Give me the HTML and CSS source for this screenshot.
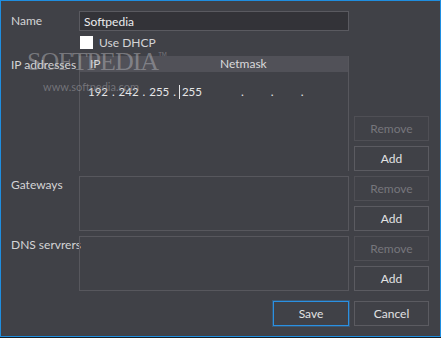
FILE: index.html
```html
<!DOCTYPE html>
<html lang="en">
<head>
    <meta charset="UTF-8">
    <title>Network settings</title>
    <link rel="stylesheet" href="styles.css">
</head>
<body>
    <div class="dialog">
        <div class="row name-row">
            <label class="lbl">Name</label>
            <input class="text" type="text" value="Softpedia">
        </div>

        <div class="row dhcp-row">
            <span class="lbl"></span>
            <label class="check"><span class="box"></span>Use DHCP</label>
        </div>

        <div class="row list-row ip-row">
            <span class="lbl">IP addresses</span>
            <div class="panel ip-panel">
                <div class="head">
                    <span>IP</span>
                    <span>Netmask</span>
                </div>
                <div class="ip-line">
                    <span class="addr">192 . 242 . 255 .<span class="caret"></span>255</span>
                    <span class="mask"><i>.</i><i>.</i><i>.</i></span>
                </div>
            </div>
            <div class="side">
                <button class="btn" disabled>Remove</button>
                <button class="btn">Add</button>
            </div>
        </div>

        <div class="row list-row">
            <span class="lbl">Gateways</span>
            <div class="panel boxed"></div>
            <div class="side">
                <button class="btn" disabled>Remove</button>
                <button class="btn">Add</button>
            </div>
        </div>

        <div class="row list-row">
            <span class="lbl">DNS servrers</span>
            <div class="panel boxed"></div>
            <div class="side">
                <button class="btn" disabled>Remove</button>
                <button class="btn">Add</button>
            </div>
        </div>

        <div class="row footer">
            <button class="btn primary">Save</button>
            <button class="btn">Cancel</button>
        </div>

        <!-- watermark sits on top of the form -->
        <div class="mark">SOFTPEDIA<sup>TM</sup></div>
        <div class="mark-url">www.softpedia.com</div>
    </div>
</body>
</html>
```

FILE: styles.css
```css
body {
    margin: 0;
    background-color: #1c1c1e;
    font-family: Lato, "Noto Sans", sans-serif;
    font-size: 12px;
    color: #d4d4d6;
}
.dialog {
    position: relative;
    box-sizing: border-box;
    width: 441px;
    height: 337px;
    padding: 10px 11px 0 10px;
    background-color: #404147;
    border: 1px solid #1f8ee0;
}
.row {
    display: flex;
}
.lbl {
    width: 68px;
    flex: none;
    line-height: 16px;
    white-space: nowrap;
}
.name-row {
    height: 20px;
}
.name-row .lbl {
    line-height: 20px;
}
.text {
    box-sizing: border-box;
    width: 270px;
    height: 20px;
    margin: 0;
    padding: 0 4px;
    background-color: #333338;
    border: 1px solid #5a5a60;
    color: #ececee;
    font: inherit;
    outline: none;
}
.dhcp-row {
    margin-top: 5px;
    height: 13px;
}
.check {
    display: flex;
    align-items: center;
    line-height: 13px;
}
.box {
    width: 13px;
    height: 13px;
    margin: 0 6px 0 1px;
    background-color: #fff;
}
.list-row {
    margin-top: 5px;
    height: 55px;
}
.list-row .lbl {
    padding-top: 1px;
}
.ip-row {
    margin-top: 7px;
    height: 115px;
}
.panel {
    box-sizing: border-box;
    width: 270px;
    flex: none;
}
.boxed {
    border: 1px solid #57575d;
}
.ip-panel {
    border-left: 1px solid #57575d;
    border-right: 1px solid #57575d;
}
.head {
    display: grid;
    grid-template-columns: 140px 1fr;
    height: 16px;
    line-height: 16px;
    background-color: #515158;
    color: #dadadc;
}
.head span:first-child {
    padding-left: 10px;
}
.ip-line {
    display: grid;
    grid-template-columns: 140px 1fr;
    margin-top: 12px;
    line-height: 16px;
    color: #e6e6e8;
}
.addr {
    padding-left: 8px;
    white-space: pre;
    font-size: 11.5px;
    word-spacing: 1px;
}
.caret {
    display: inline-block;
    width: 0;
    height: 14px;
    margin: 0 2px 0 3px;
    border-left: 1px solid #e6e6e8;
    vertical-align: -3px;
}
.mask {
    display: flex;
    gap: 27px;
    padding-left: 21px;
}
.mask i {
    font-style: normal;
}
.side {
    display: flex;
    flex-direction: column;
    justify-content: flex-end;
    gap: 5px;
    margin-left: 5px;
}
.btn {
    box-sizing: border-box;
    width: 75px;
    height: 25px;
    margin: 0;
    padding: 0;
    background-color: #404147;
    border: 1px solid #5b5b61;
    color: #e2e2e4;
    font: inherit;
}
.btn:disabled {
    color: #76767c;
    border-color: #4f4f55;
}
.footer {
    margin-top: 10px;
    padding-left: 262px;
    gap: 5px;
}
.primary {
    width: 76px;
    border-color: #2a90e2;
    box-shadow: 0 0 0 1px rgba(42, 144, 226, 0.3);
}
.mark {
    position: absolute;
    left: 26px;
    top: 46px;
    font-family: "Liberation Serif", serif;
    font-size: 26px;
    letter-spacing: -1px;
    color: rgba(190, 190, 194, 0.45);
    pointer-events: none;
}
.mark sup {
    font-family: "Liberation Sans", sans-serif;
    font-size: 6px;
    letter-spacing: 0;
    vertical-align: 14px;
}
.mark-url {
    position: absolute;
    left: 42px;
    top: 79px;
    font-size: 11px;
    color: rgba(150, 150, 156, 0.6);
    pointer-events: none;
}
```
